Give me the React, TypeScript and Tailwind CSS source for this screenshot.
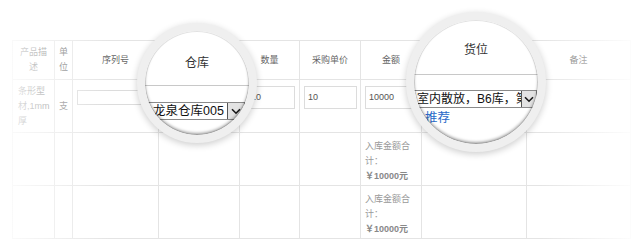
import React from 'react';

const font = "font-['Liberation_Sans','Noto_Sans_CJK_SC',sans-serif]";

const Chevron = () => (
  <svg width="10" height="7" viewBox="0 0 10 7" fill="none">
    <polyline points="1,1.2 5,5.2 9,1.2" stroke="#1a1a1a" strokeWidth="1.6" />
  </svg>
);

const Box = ({ value, className }: { value?: string; className: string }) => (
  <div className={`border border-[#dcdcdc] bg-white flex items-center text-[9px] text-[#555] ${className}`}>
    {value}
  </div>
);

export default function App() {
  const th = 'border border-[#e4e4e4] font-normal text-[9px] leading-[15px] text-[#666] text-center align-middle';
  const td = 'border border-[#e4e4e4] text-[9px] leading-[15px] text-[#777]';

  return (
    <div className={`relative w-[640px] h-[249px] bg-white overflow-hidden ${font}`}>
      <div className="pt-[40px] pl-[12px]">
        <table className="table-fixed border-collapse w-[618px]">
          <colgroup>
            <col className="w-[42px]" />
            <col className="w-[18px]" />
            <col className="w-[86px]" />
            <col className="w-[81px]" />
            <col className="w-[60px]" />
            <col className="w-[61px]" />
            <col className="w-[61px]" />
            <col className="w-[105px]" />
            <col className="w-[104px]" />
          </colgroup>
          <thead>
            <tr className="h-[39px]">
              <th className={`${th} px-[5px]`}>产品描述</th>
              <th className={`${th} px-0`}>单位</th>
              <th className={th}>序列号</th>
              {/* 仓库 and 货位 are shown magnified in the lenses */}
              <th className={th}></th>
              <th className={th}>数量</th>
              <th className={th}>采购单价</th>
              <th className={th}>金额</th>
              <th className={th}></th>
              <th className={th}>备注</th>
            </tr>
          </thead>
          <tbody>
            <tr className="h-[53px]">
              <td className={`${td} px-[5px] align-middle`}>条形型材,1mm厚</td>
              <td className={`${td} px-0 text-center align-middle`}>支</td>
              <td className={`${td} align-top pt-[10px] pl-[4px]`}>
                <Box className="w-[70px] h-[15px]" />
              </td>
              <td className={td}></td>
              <td className={`${td} align-top pt-[6px] pl-[4px]`}>
                <Box value="10" className="w-[51px] h-[23px] pl-[6px]" />
              </td>
              <td className={`${td} align-top pt-[6px] pl-[4px]`}>
                <Box value="10" className="w-[53px] h-[23px] pl-[3px]" />
              </td>
              <td className={`${td} align-top pt-[6px] pl-[4px]`}>
                <Box value="10000" className="w-[54px] h-[23px] pl-[3px]" />
              </td>
              <td className={td}></td>
              <td className={td}></td>
            </tr>
            {[0, 1].map((i) => (
              <tr key={i} className="h-[53px]">
                <td className={td}></td>
                <td className={td}></td>
                <td className={td}></td>
                <td className={td}></td>
                <td className={td}></td>
                <td className={td}></td>
                <td className={`${td} align-top pt-[6px] pl-[4px] pr-0 text-[#999] leading-[14.5px]`}>
                  入库金额合计：
                  <div className="font-bold text-[#888]">￥10000元</div>
                </td>
                <td className={td}></td>
                <td className={td}></td>
              </tr>
            ))}
          </tbody>
        </table>
      </div>

      {/* edge fades */}
      <div className="absolute left-0 top-0 bottom-0 w-[110px] bg-linear-to-r from-white/90 to-white/0" />
      <div className="absolute right-0 top-0 bottom-0 w-[100px] bg-linear-to-l from-white to-white/0" />

      {/* lens over 仓库 */}
      <div className="absolute left-[137px] top-[23px] w-[120px] h-[120px] rounded-full bg-[#efefef] p-[8px] shadow-[0_2px_7px_rgba(0,0,0,0.2)]">
        <div className="relative w-full h-full rounded-full overflow-hidden bg-white">
          <div className="absolute left-0 right-0 top-[24px] text-center text-[12px] leading-[16px] text-[#333]">仓库</div>
          <div className="absolute left-0 right-0 top-[54px] h-px bg-[#c8c8c8]" />
          <div className="absolute left-[-10px] top-[71px] w-[110px] h-[18px] border border-[#8a8a8a] bg-white flex">
            <div className="flex-1 pl-[17px] text-[12.5px] leading-[16px] text-[#111] whitespace-nowrap overflow-hidden">龙泉仓库005</div>
            <div className="w-[17px] h-full border-l border-[#555] bg-[#e3e3e3] flex items-center justify-center">
              <Chevron />
            </div>
          </div>
          <div className="absolute inset-0 rounded-full shadow-[inset_0_-2px_3px_rgba(0,0,0,0.35),inset_0_0_0_1px_rgba(0,0,0,0.1)]" />
        </div>
      </div>

      {/* lens over 货位 */}
      <div className="absolute left-[406px] top-[12px] w-[140px] h-[140px] rounded-full bg-[#efefef] p-[8px] shadow-[0_2px_7px_rgba(0,0,0,0.2)]">
        <div className="relative w-full h-full rounded-full overflow-hidden bg-white">
          <div className="absolute left-0 right-0 top-[22px] text-center text-[12px] leading-[16px] text-[#333]">货位</div>
          <div className="absolute left-0 right-0 top-[54px] h-px bg-[#c8c8c8]" />
          <div className="absolute left-[-10px] top-[70px] w-[133px] h-[18px] border border-[#8a8a8a] bg-white flex">
            <div className="flex-1 pl-[12px] text-[12px] leading-[16px] text-[#111] whitespace-nowrap overflow-hidden">室内散放，B6库，第三排</div>
            <div className="w-[15px] h-full border-l border-[#555] bg-[#e3e3e3] flex items-center justify-center">
              <Chevron />
            </div>
          </div>
          <div className="absolute left-[11px] top-[90px] text-[12.5px] leading-[16px] text-[#2a6ac8]">推荐</div>
          <div className="absolute inset-0 rounded-full shadow-[inset_0_-2px_3px_rgba(0,0,0,0.35),inset_0_0_0_1px_rgba(0,0,0,0.1)]" />
        </div>
      </div>
    </div>
  );
}
